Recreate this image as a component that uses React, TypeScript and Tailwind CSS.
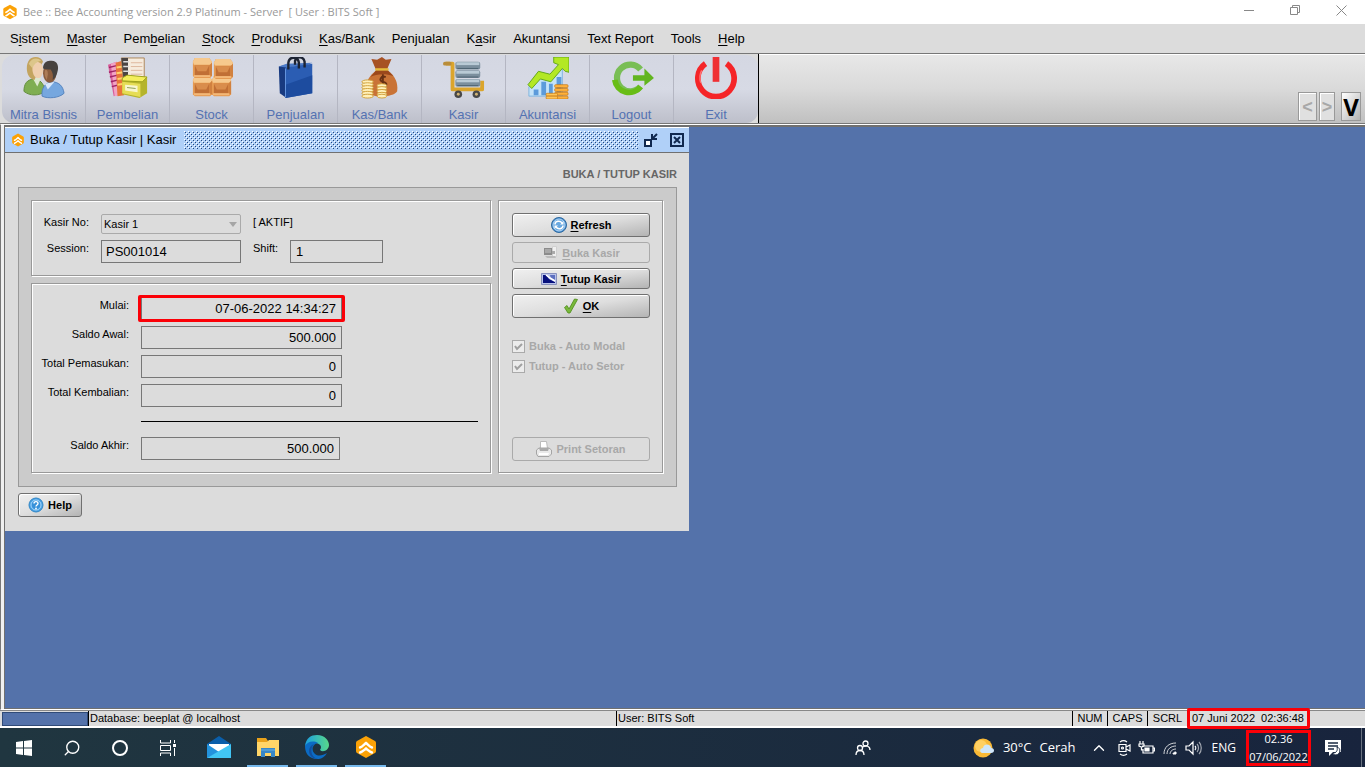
import type { ReactNode } from "react";
import { ChevronUp, Search } from "lucide-react";

const MENU = [
  ["S", "i", "stem"],
  ["", "M", "aster"],
  ["Pem", "b", "elian"],
  ["", "S", "tock"],
  ["", "P", "roduksi"],
  ["", "K", "as/Bank"],
  ["Penjualan", "", ""],
  ["K", "a", "sir"],
  ["Akuntansi", "", ""],
  ["Text Report", "", ""],
  ["Tools", "", ""],
  ["", "H", "elp"],
] as const;

function BeeLogo({ className }: { className: string }) {
  return (
    <svg viewBox="0 0 24 24" className={className} aria-hidden="true">
      <path d="M12 1l9 5q1 .6 1 2v8q0 1.400-1 2l-9 5-9-5q-1-.6-1-2V8q0-1.400 1-2z" fill="#fba207" />
      <path d="M6 12.500c2-.5 3.500-2.500 6-4.500 2.500 2 4 4 6 4.500M6 17.500c2-.5 3.500-2 6-4 2.500 2 4 3.500 6 4" fill="none" stroke="#fff" strokeWidth="2.400" strokeLinecap="round" />
    </svg>
  );
}

function PeopleIcon() {
  return (
    <svg viewBox="0 0 44 44" className="h-[42px] w-[42px]" aria-hidden="true">
      <path d="M1 36c0-8 3-12 10-13 6 0 11 4 12 13-6 5-16 5-22 0z" fill="#7fae52" stroke="#5f8b3a" />
      <path d="M10 22l5 9 4-9z" fill="#dce8cf" />
      <path d="M4 12C4 4 8 0 13 0c4 0 7 2 8 5l-3 5-6 14c-5-1-8-6-8-12z" fill="#c3a45f" />
      <path d="M10 8c3-5 11-3 11 5 0 5-2 9-5 9-4 0-7-5-6-14z" fill="#efcfae" />
      <path d="M6 7c3-6 9-7 13-3-5 1-8 4-9 8z" fill="#dcc68a" />
      <path d="M20 41c-1-8 3-14 10-15 7 0 12 4 13 12-5 5-17 6-23 3z" fill="#76a7df" stroke="#5482bd" />
      <path d="M23 28l3 6 7-8z" fill="#d9e8fa" />
      <ellipse cx="28" cy="17" rx="7" ry="10" fill="#8b5d3d" />
      <path d="M21 12c0-6 4-9 9-8 6 0 8 6 6 12-1 4-3 7-5 8 1-5 0-8-2-11-3 0-6 0-8-1z" fill="#47423f" />
      <path d="M23 14c2-1 3 0 3 4l-1 6c-2-3-3-6-2-10z" fill="#ad7c57" />
    </svg>
  );
}

function PurchaseIcon() {
  return (
    <svg viewBox="0 0 44 44" className="h-[42px] w-[42px]" aria-hidden="true">
      <path d="M1 8l9-3 4 34-7 2z" fill="#d95f9b" />
      <path d="M4 7l6-2 3 35-5 1z" fill="#f1a3c4" />
      <path d="M2 11l8-2M2 16l9-2M3 21l8-2M4 26l8-2M5 31l8-2" stroke="#9f2466" strokeWidth="1.500" />
      <path d="M9 6l7-2 2 36-7 1z" fill="#e8743a" />
      <path d="M10 11l7-1M10 17l7-1M11 23l7-1M11 29l7-1" stroke="#ffd26a" strokeWidth="2" />
      <path d="M15 1h24v22H17z" fill="#f6ebdd" stroke="#ac8557" />
      <path d="M15 1h7v20h-5z" fill="#4b4542" />
      <path d="M17 5h6M17 10h6M17 15h6" stroke="#ddd" strokeWidth="1.500" />
      <path d="M25 6h12M25 10h12M25 14h12M25 18h12" stroke="#dcb79c" />
      <path d="M16 22l5-3 21 2v17l-8 5-18-4z" fill="#b5b42c" />
      <path d="M16 22l5-3 21 2-5 5-21-1z" fill="#f4ee5b" stroke="#9ca01b" />
      <path d="M16 26l19 2v14l-19-4z" fill="#e6dd55" />
      <path d="M19 29l13 1v7l-13-2z" fill="#f8f6cf" />
      <path d="M21 32l9 1" stroke="#8b9b55" />
    </svg>
  );
}

function BoxesIcon() {
  return (
    <svg viewBox="0 0 44 44" className="h-[42px] w-[42px]" aria-hidden="true">
      {[
        [2, 20],
        [22, 20],
        [2, 1],
        [24, 2],
      ].map(([x, y]) => (
        <g key={`${x}-${y}`} transform={`translate(${x} ${y})`}>
          <path d="M0 4l2-4h15l3 4v15l-2 2H2l-2-2z" fill="#e59a52" />
          <path d="M0 4l2-4h15l3 4-1 3H1z" fill="#f6c98d" />
          <path d="M2 8h15v10H2z" fill="#c06f35" />
          <path d="M2 8h15l-3 6H5z" fill="#d98d4c" />
          <path d="M17 8l3-3v14l-3-1z" fill="#d1813f" />
          <path d="M1 19h17" stroke="#f3b878" strokeWidth="2" />
        </g>
      ))}
    </svg>
  );
}

function BagIcon() {
  return (
    <svg viewBox="0 0 44 44" className="h-[42px] w-[42px]" aria-hidden="true">
      <path d="M4 10l8-2v35l-7-5z" fill="#183a80" />
      <path d="M4 10l8-3 27-1-6 3-21 2z" fill="#4b7ac8" />
      <path d="M11 11l28-4v31l-28 5z" fill="#2b5db3" />
      <path d="M11 29l28-10v19l-28 5z" fill="#1d4c9f" />
      <path d="M14 13V6c1-7 10-7 11 0v6M21 8V4c1-5 9-5 10 1v6" fill="none" stroke="#1d2433" strokeWidth="2.500" />
      <path d="M11 12v30" stroke="#6797df" />
    </svg>
  );
}

function MoneyIcon() {
  return (
    <svg viewBox="0 0 44 44" className="h-[42px] w-[42px]" aria-hidden="true">
      <path d="M13 2l6 1 5-3 4 3 6-1-5 12H18z" fill="#a75223" />
      <path d="M18 14h12c8 6 11 13 10 22-4 7-27 7-33 1-1-11 4-17 11-23z" fill="#c97336" />
      <path d="M18 14h12l6 6c-9-3-18-2-24 1z" fill="#9b481c" />
      <path d="M17 13h14" stroke="#e5bd3d" strokeWidth="2.500" />
      <path d="M28 21c-5-2-8 4-3 5 6 1 4 6-1 5M25 18v16" fill="none" stroke="#683113" strokeWidth="2" />
      {[26, 29, 32, 35, 38, 41].map((y) => (
        <ellipse key={y} cx="9" cy={y} rx="6" ry="2" fill="#fff0ba" stroke="#d0a13b" />
      ))}
      {[30, 33, 36, 39, 41].map((y) => (
        <ellipse key={y} cx="24" cy={y} rx="5" ry="2" fill="#fff0ba" stroke="#d0a13b" />
      ))}
    </svg>
  );
}

function CartIcon() {
  return (
    <svg viewBox="0 0 44 44" className="h-[42px] w-[42px]" aria-hidden="true">
      <path d="M3 7h7v27h31v-9" fill="none" stroke="#dba52c" strokeWidth="4" strokeLinejoin="round" />
      <path d="M2 7h5" stroke="#b98d3a" strokeWidth="4" strokeLinecap="round" />
      {[5, 14, 23].map((y) => (
        <g key={y}>
          <rect x="13" y={y} width="26" height="8" rx="2" fill="#7b8f9d" />
          <path d={`M14 ${y + 2}h24`} stroke="#b9cad5" strokeWidth="3" />
          <path d={`M15 ${y + 7}h22`} stroke="#4d6270" />
        </g>
      ))}
      <circle cx="16" cy="39" r="4" fill="#484848" />
      <circle cx="35" cy="39" r="4" fill="#484848" />
      <circle cx="16" cy="39" r="1.500" fill="#d1b477" />
      <circle cx="35" cy="39" r="1.500" fill="#d1b477" />
    </svg>
  );
}

function ChartIcon() {
  return (
    <svg viewBox="0 0 44 44" className="h-[42px] w-[42px]" aria-hidden="true">
      <path d="M2 31l12-11 10 3 13-14v32H2z" fill="#c5e3f8" stroke="#7fb3de" />
      <path d="M7 34h5v6H7zM15 26h5v14h-5zM23 28h4v12h-4zM31 21h5v19h-5z" fill="#5c9bdb" />
      <path d="M1 29L12 15l12 3 9-10-5-2V0h16v16l-4-1-3-3-12 14-11-3-9 10z" fill="#b3e824" stroke="#62a618" strokeLinejoin="round" />
      {[29, 33, 37, 41].map((y) => (
        <rect key={y} x="29" y={y} width="14" height="3" rx="1" fill="#ffb13a" stroke="#c2730f" strokeWidth=".7" />
      ))}
      {[38, 41].map((y) => (
        <rect key={y} x="20" y={y} width="12" height="3" rx="1" fill="#ffc556" stroke="#c2730f" strokeWidth=".7" />
      ))}
    </svg>
  );
}

function LogoutIcon() {
  return (
    <svg viewBox="0 0 44 44" className="h-[42px] w-[44px]" aria-hidden="true">
      <path d="M31 13A14 14 0 1 0 31 31" fill="none" stroke="#79be55" strokeWidth="6.500" />
      <path d="M4 24a15 15 0 0 0 27 7" fill="none" stroke="#68bd16" strokeWidth="6" />
      <path d="M23 19h12v-7l10 10-10 8v-5H23z" fill="#62b51f" />
    </svg>
  );
}

function PowerIcon() {
  return (
    <svg viewBox="0 0 44 44" className="h-[42px] w-[44px]" aria-hidden="true">
      <path d="M11 7a19 19 0 1 0 22 0" fill="none" stroke="#f52528" strokeWidth="6" />
      <path d="M22 0v26" stroke="#ef3034" strokeWidth="7" />
      <path d="M7 14a17 17 0 0 0-1 13" fill="none" stroke="#ff7273" strokeWidth="1.500" />
    </svg>
  );
}

const TOOLS = [
  { label: "Mitra Bisnis", icon: PeopleIcon },
  { label: "Pembelian", icon: PurchaseIcon },
  { label: "Stock", icon: BoxesIcon },
  { label: "Penjualan", icon: BagIcon },
  { label: "Kas/Bank", icon: MoneyIcon },
  { label: "Kasir", icon: CartIcon },
  { label: "Akuntansi", icon: ChartIcon },
  { label: "Logout", icon: LogoutIcon },
  { label: "Exit", icon: PowerIcon },
];

function RefreshIcon() {
  return (
    <svg viewBox="0 0 16 16" className="h-4 w-4" aria-hidden="true">
      <circle cx="8" cy="8" r="7.500" fill="#4088cc" stroke="#306a9f" />
      <circle cx="8" cy="8" r="6" fill="#69a8e0" stroke="#b5d6f3" />
      <path d="M4 7.500c0-3.500 5-4.500 7-1.500M12 8.500c0 3.500-5 4.500-7 1.500" fill="none" stroke="#fff" strokeWidth="1.500" />
      <path d="M12.500 4v3.500H9zM3.500 12V8.500H7z" fill="#fff" />
    </svg>
  );
}

function RegisterIcon() {
  return (
    <svg viewBox="0 0 16 16" className="h-4 w-4" aria-hidden="true">
      <path d="M10.500 1.500h4v10h-4z" fill="#efefef" stroke="#d0d0d0" />
      <path d="M2 3h8v7H2z" fill="#8b8b8b" />
      <path d="M3 5h6M3 7h6" stroke="#c4c4c4" />
      <path d="M10 6h3v3h-3z" fill="#aaa" />
      <path d="M3 11h10l1 2H5z" fill="#bbb" />
    </svg>
  );
}

function CloseShiftIcon() {
  return (
    <svg viewBox="0 0 16 12" className="h-3 w-4" aria-hidden="true">
      <path d="M.5.5h15v11H.5z" fill="#b9c3ea" stroke="#8790bd" />
      <path d="M2 2h3l3 4 6 3v1H2z" fill="#07107d" />
      <path d="M9 2h5v5l-4-1z" fill="#5c6fc0" />
      <path d="M5 2l4 3 5 3" fill="none" stroke="#fff" strokeWidth="1.500" />
    </svg>
  );
}

function CheckIcon() {
  return (
    <svg viewBox="0 0 16 16" className="h-4 w-4" aria-hidden="true">
      <path d="M1.500 9.500l2.500-2 2 3.500 5.500-10 3 .5L7 15H5z" fill="#79b93c" stroke="#4b8a16" strokeWidth=".8" strokeLinejoin="round" />
    </svg>
  );
}

function PrinterIcon() {
  return (
    <svg viewBox="0 0 16 16" className="h-4 w-4" aria-hidden="true">
      <path d="M4.500.5h6l1 7h-7z" fill="#fff" stroke="#bbb" />
      <path d="M.5 9L3 7h10l2.500 2v4L13 15.500H2L.5 13z" fill="#e9e9e9" stroke="#a5a5a5" />
      <path d="M3 7h10l-1 3H4z" fill="#aaa" />
      <path d="M3 12h10l-1 2H3z" fill="#fff" />
    </svg>
  );
}

function HelpIcon() {
  return (
    <svg viewBox="0 0 16 16" className="h-4 w-4" aria-hidden="true">
      <circle cx="8" cy="8" r="7" fill="#4ba2e5" stroke="#2f85c5" />
      <circle cx="8" cy="8" r="5" fill="#3791da" stroke="#a9d8fb" />
      <path d="M6 6.500c0-2.500 4-2.500 4 0 0 1.500-2 1.500-2 3" fill="none" stroke="#fff" strokeWidth="1.400" />
      <circle cx="8" cy="11.500" r=".9" fill="#fff" />
    </svg>
  );
}

type ActionButtonProps = {
  icon: ReactNode;
  hotkey?: string;
  label: string;
  disabled?: boolean;
  size: string;
};

function ActionButton({ icon, hotkey, label, disabled, size }: ActionButtonProps) {
  return (
    <button
      type="button"
      disabled={disabled}
      className={`flex items-center justify-center gap-1 rounded-[3px] border text-[11px] leading-4 font-bold whitespace-nowrap ${size} ${
        disabled
          ? "border-[#aaa] bg-[#dcdcdc] text-[#a8a8a8]"
          : "border-[#707070] bg-linear-to-br from-[#f0f0f0] via-[#dedede] to-[#b4b4b4] text-black shadow-[inset_1px_1px_0_#fff]"
      }`}
    >
      {icon}
      <span>
        {hotkey && <u className="underline-offset-2">{hotkey}</u>}
        {label}
      </span>
    </button>
  );
}

type AmountRowProps = {
  id: string;
  label: string;
  value: string;
  width?: string;
  marked?: boolean;
};

function AmountRow({ id, label, value, width = "w-[201px]", marked }: AmountRowProps) {
  return (
    <div className="flex items-start gap-3">
      <label htmlFor={id} className="w-[97px] text-right text-[11px] leading-4 whitespace-nowrap">
        {label}
      </label>
      <div className="relative">
        <input
          id={id}
          readOnly
          defaultValue={value}
          className={`block h-[23px] border border-[#777] bg-[#dcdcdc] px-[5px] text-right text-[13px] ${width}`}
        />
        {marked && (
          <span className="pointer-events-none absolute -inset-x-[3px] -inset-y-0.5 rounded-xs border-3 border-[#fb0007]" />
        )}
      </div>
    </div>
  );
}

function CashierWindow() {
  const panel = "border border-[#999] bg-[#dcdcdc] shadow-[inset_1px_1px_0_#fff,1px_1px_0_#fff]";

  return (
    <section className="w-[684px] max-w-full border-t border-white bg-[#dcdcdc] pb-3.5" aria-label="Buka / Tutup Kasir">
      <header className="flex h-[25px] items-center border-b border-[#707070] bg-[#b0d0f8] pl-1.5">
        <BeeLogo className="h-3.5 w-3.5" />
        <h1 className="pr-2 pl-[5px] text-[13px] whitespace-nowrap">Buka / Tutup Kasir | Kasir</h1>
        <svg className="h-[18px] min-w-0 flex-1" aria-hidden="true">
          <defs>
            <pattern id="bumps" width="4" height="4" patternUnits="userSpaceOnUse">
              <path d="M0 0h1v1H0zM2 2h1v1H2z" fill="#fff" />
              <path d="M1 1h1v1H1zM3 3h1v1H3z" fill="#24477c" />
            </pattern>
          </defs>
          <rect width="100%" height="100%" fill="url(#bumps)" />
        </svg>
        <div className="flex items-center gap-3 pr-[5px] pl-[5px]">
          <button type="button" aria-label="Kembalikan">
            <svg viewBox="0 0 14 14" className="h-3.5 w-3.5" aria-hidden="true">
              <path d="M1 7h6v6H1z" fill="#fff" stroke="#10284f" strokeWidth="2" />
              <path d="M13 1L9 5M8 1v5h5" fill="none" stroke="#10284f" strokeWidth="2" />
            </svg>
          </button>
          <button type="button" aria-label="Tutup">
            <svg viewBox="0 0 14 14" className="h-3.5 w-3.5" aria-hidden="true">
              <path d="M1 1h12v12H1z" fill="#b0d0f8" stroke="#10284f" strokeWidth="2" />
              <path d="M4 4l6 6M10 4l-6 6" stroke="#10284f" strokeWidth="2" />
            </svg>
          </button>
        </div>
      </header>

      <h2 className="px-3 pt-[13px] pb-[5px] text-right text-[11px] leading-4 font-bold text-[#666]">
        BUKA / TUTUP KASIR
      </h2>

      <div className="mr-3 ml-[13px] flex gap-[7px] border border-[#999] bg-[#cbcbcb] pt-3 pr-[13px] pb-[13px] pl-3">
        <div className="flex min-w-0 flex-1 flex-col gap-[7px]">
          <div className={`flex flex-col gap-1.5 pt-[13px] pb-3 ${panel}`}>
            <div className="flex items-start gap-3">
              <label htmlFor="kasir" className="w-[57px] text-right text-[11px] leading-4">
                Kasir No:
              </label>
              <div className="relative">
                <select
                  id="kasir"
                  disabled
                  className="block h-5 w-[140px] appearance-none rounded-xs border border-[#aaa] px-0.5 text-[11px] text-black opacity-100"
                >
                  <option>Kasir 1</option>
                </select>
                <span className="pointer-events-none absolute top-2 right-1 border-x-4 border-t-5 border-x-transparent border-t-[#a5a5a5]" />
              </div>
              <span className="text-[11px] leading-4">[ AKTIF]</span>
            </div>
            <div className="flex items-start gap-3">
              <label htmlFor="session" className="w-[57px] text-right text-[11px] leading-4">
                Session:
              </label>
              <input
                id="session"
                readOnly
                defaultValue="PS001014"
                className="h-[23px] w-[140px] border border-[#777] px-1 text-[13px]"
              />
              <label htmlFor="shift" className="text-[11px] leading-4">
                Shift:
              </label>
              <input
                id="shift"
                readOnly
                defaultValue="1"
                className="h-[23px] w-[93px] border border-[#777] px-[5px] text-[13px]"
              />
            </div>
          </div>

          <div className={`flex flex-1 flex-col gap-1.5 pt-[13px] pb-3 ${panel}`}>
            <AmountRow id="mulai" label="Mulai:" value="07-06-2022 14:34:27" marked />
            <AmountRow id="awal" label="Saldo Awal:" value="500.000" />
            <AmountRow id="masuk" label="Total Pemasukan:" value="0" />
            <AmountRow id="kembali" label="Total Kembalian:" value="0" />
            <hr className="mt-2 mr-3 mb-[9px] ml-[109px] border-black" />
            <AmountRow id="akhir" label="Saldo Akhir:" value="500.000" width="w-[199px]" />
          </div>
        </div>

        <div className={`flex w-[165px] shrink-0 flex-col gap-[5px] pt-3 pr-3 pb-[11px] pl-[13px] ${panel}`}>
          <ActionButton icon={<RefreshIcon />} hotkey="R" label="efresh" size="h-6" />
          <ActionButton icon={<RegisterIcon />} hotkey="B" label="uka Kasir" size="h-[21px]" disabled />
          <ActionButton icon={<CloseShiftIcon />} hotkey="T" label="utup Kasir" size="h-[21px]" />
          <ActionButton icon={<CheckIcon />} hotkey="O" label="K" size="h-6" />
          <div className="mt-[15px] flex flex-col gap-1 text-[11px] leading-4 font-bold text-[#a8a8a8]">
            {["Buka - Auto Modal", "Tutup - Auto Setor"].map((label) => (
              <label key={label} className="flex items-center gap-1 whitespace-nowrap">
                <span className="relative block h-[13px] w-[13px]">
                  <input
                    type="checkbox"
                    disabled
                    defaultChecked
                    className="block h-[13px] w-[13px] appearance-none border border-[#aaa] bg-[#ececec]"
                  />
                  <svg viewBox="0 0 13 13" className="pointer-events-none absolute inset-0" aria-hidden="true">
                    <path d="M3 6l2 3 5-5" fill="none" stroke="#a0a0a0" strokeWidth="2" />
                  </svg>
                </span>
                {label}
              </label>
            ))}
          </div>
          <div className="mt-auto flex flex-col">
            <ActionButton icon={<PrinterIcon />} label="Print Setoran" size="h-6" disabled />
          </div>
        </div>
      </div>

      <div className="flex px-[13px] pt-1.5">
        <ActionButton icon={<HelpIcon />} label="Help" size="h-6 w-16" />
      </div>
    </section>
  );
}

function Desktop() {
  return (
    <main className="flex flex-1 border-y border-l border-y-white border-l-[#777] bg-[#f0f0f0] pl-[3px]">
      <div className="flex-1 border-t-2 border-b border-l border-[#707070] bg-[#5472aa]">
        <CashierWindow />
      </div>
    </main>
  );
}

function TitleBar() {
  return (
    <header className="flex h-6 items-center bg-white pl-0.5">
      <BeeLogo className="h-4 w-4" />
      <p className="flex-1 pl-[5px] font-['Open_Sans',sans-serif] text-[11px] whitespace-pre text-[#999]">
        Bee :: Bee Accounting version 2.9 Platinum - Server {" [ User : BITS Soft ]"}
      </p>
      <div className="flex gap-[35px] pr-[18px] pb-1 text-[#888]">
        <button type="button" aria-label="Minimize">
          <svg viewBox="0 0 11 11" className="h-[11px] w-[11px]" aria-hidden="true">
            <path d="M0 5.500h10" stroke="currentColor" />
          </svg>
        </button>
        <button type="button" aria-label="Restore">
          <svg viewBox="0 0 11 11" className="h-[11px] w-[11px]" aria-hidden="true">
            <path d="M.5 2.500h7v7h-7zM2.500 2.500v-2h7v7h-2" fill="none" stroke="currentColor" />
          </svg>
        </button>
        <button type="button" aria-label="Close">
          <svg viewBox="0 0 11 11" className="h-[11px] w-[11px]" aria-hidden="true">
            <path d="M.5.5l10 10M10.500.5l-10 10" stroke="currentColor" />
          </svg>
        </button>
      </div>
    </header>
  );
}

function ToolBar() {
  return (
    <div className="flex h-[71px] border-t border-b border-[#777] bg-linear-to-b from-[#e8e8e8] via-[#dadada] to-[#c0c0c0] shadow-[inset_0_1px_0_#fff]">
      <div className="flex border-r border-black bg-[#dcdcdc] pt-px pl-0.5">
        {TOOLS.map(({ label, icon: Icon }) => (
          <button
            key={label}
            type="button"
            className="flex w-21 flex-col items-center justify-between border-r border-[#b4b6c2] bg-linear-to-b from-[#d4d7e2] via-[#d7dae5] to-[#bdbfca] pt-0.5 text-[13px] leading-4 text-[#5472b2] first:rounded-l-xl last:rounded-r-xl last:border-r-0"
          >
            <Icon />
            <span>{label}</span>
          </button>
        ))}
      </div>
      <div className="flex flex-1 items-end justify-end gap-0.5 pr-1 pb-0.5">
        <button type="button" disabled className="h-[29px] w-[19px] border border-[#999] bg-[#e0e0e0] text-[18px] leading-6 font-bold text-[#a8a8a8] shadow-[inset_1px_1px_0_#fff]">
          &lt;
        </button>
        <button type="button" disabled className="h-[29px] w-4 border border-[#999] bg-[#e0e0e0] text-[18px] leading-6 font-bold text-[#a8a8a8] shadow-[inset_1px_1px_0_#fff]">
          &gt;
        </button>
        <button type="button" className="ml-1 h-[29px] w-5 border border-[#999] bg-linear-to-br from-white to-[#b4b4b4] font-['Open_Sans',sans-serif] text-[24px] leading-6 font-bold">
          V
        </button>
      </div>
    </div>
  );
}

function StatusBar() {
  return (
    <footer className="flex h-[18px] items-center border-t border-b-2 border-t-[#888] border-b-white bg-[#dcdcdc] pl-0.5 text-[11px] leading-[15px] whitespace-nowrap">
      <span className="h-3.5 w-[86px] border border-[#304b78] bg-[#5472aa]" />
      <span className="w-[528px] border-l border-black pl-px">Database: beeplat @ localhost</span>
      <span className="flex-1 border-l border-black pl-px">User: BITS Soft</span>
      <span className="w-[35px] border-l border-black text-center">NUM</span>
      <span className="w-10 border-l border-black text-center">CAPS</span>
      <span className="w-10 border-l border-black text-center">SCRL</span>
      <span className="relative w-[123px] pl-[5px] whitespace-pre">
        {"07 Juni 2022  02:36:48"}
        <span className="pointer-events-none absolute inset-x-0 -inset-y-[3px] rounded-xs border-3 border-[#fb0007]" />
      </span>
      <span className="w-[55px]" />
    </footer>
  );
}

const PINNED = [
  {
    label: "Mail",
    open: false,
    icon: (
      <svg viewBox="0 0 24 24" className="h-6 w-6" aria-hidden="true">
        <path d="M0 9l12-8 12 8v14H0z" fill="#0a5eaa" />
        <path d="M2 9h20v8H2z" fill="#fff" />
        <path d="M0 9l12 8L0 23z" fill="#2392dc" />
        <path d="M24 9v14H0l12-7z" fill="#41c5f4" />
      </svg>
    ),
  },
  {
    label: "File Explorer",
    open: true,
    icon: (
      <svg viewBox="0 0 24 24" className="h-6 w-6" aria-hidden="true">
        <path d="M1 3h9l2 3h11v15H1z" fill="#e9a21b" />
        <path d="M1 7h10l2-2h10v16H1z" fill="#ffd568" />
        <path d="M5 22v-9h14v9h-4v-4H9v4z" fill="#3787c8" />
        <path d="M5 15h14" stroke="#66b0e4" />
      </svg>
    ),
  },
  {
    label: "Edge",
    open: true,
    icon: (
      <svg viewBox="0 0 24 24" className="h-6 w-6" aria-hidden="true">
        <defs>
          <linearGradient id="edgeTop" x1="0" x2="1">
            <stop offset="0" stopColor="#1b9fe0" />
            <stop offset="1" stopColor="#58d88a" />
          </linearGradient>
        </defs>
        <path d="M0 11C1 3 6 0 12 0c8 0 12 6 12 10 0 5-6 8-9 5 3-4-1-7-5-7-5 0-7 2-10 3z" fill="url(#edgeTop)" />
        <path d="M0 11c2-4 8-6 13-3-6 1-7 8-3 11 4 3 8 1 12-1-4 7-11 7-15 5-5-2-7-7-7-12z" fill="#0b6bc4" />
        <path d="M9 9c-4 4-4 13 4 15-6 0-9-4-9-8 0-3 2-6 5-7z" fill="#124f9d" />
      </svg>
    ),
  },
  { label: "Bee", open: true, icon: <BeeLogo className="h-6 w-6" /> },
];

function TaskBar() {
  return (
    <footer className="flex h-[39px] items-stretch bg-linear-to-r from-[#203640] to-[#18243d] font-['Open_Sans',sans-serif] text-white">
      <button type="button" aria-label="Start" className="flex w-12 items-center justify-center">
        <svg viewBox="0 0 16 16" className="h-4 w-4" fill="currentColor" aria-hidden="true">
          <path d="M0 2l7-1v6.500H0zM8 1l8-1v7.500H8zM0 8.500h7V15l-7-1zM8 8.500h8V16l-8-1z" />
        </svg>
      </button>
      <button type="button" aria-label="Search" className="flex w-12 items-center justify-center">
        <Search className="h-[18px] w-[18px] -scale-x-100" strokeWidth={1.8} />
      </button>
      <button type="button" aria-label="Cortana" className="flex w-12 items-center justify-center">
        <span className="h-4 w-4 rounded-full border-2 border-white" />
      </button>
      <button type="button" aria-label="Task View" className="mr-0.5 flex w-12 items-center justify-center">
        <svg viewBox="0 0 16 16" className="h-4 w-4" fill="none" stroke="currentColor" aria-hidden="true">
          <path d="M.5 0v3h10V0M.5 5.500h10v5H.5zM.5 16v-3h10v3M14.500 0v3M14.500 8v8" />
          <path d="M13 4h3v3h-3z" fill="currentColor" stroke="none" />
        </svg>
      </button>
      {PINNED.map(({ label, open, icon }) => (
        <button
          key={label}
          type="button"
          aria-label={label}
          className={`mx-1 flex w-[41px] items-center justify-center border-b-2 ${open ? "border-[#76b9ed]" : "border-transparent"}`}
        >
          {icon}
        </button>
      ))}

      <div className="ml-auto flex items-center text-[13px] whitespace-nowrap">
        <button type="button" aria-label="People" className="mr-[102px]">
          <svg viewBox="0 0 16 16" className="h-4 w-4" fill="none" stroke="currentColor" strokeWidth="1.300" aria-hidden="true">
            <circle cx="5" cy="8" r="2.500" />
            <path d="M1 15c0-6 8-6 8 0" />
            <circle cx="10.500" cy="3.500" r="2.500" />
            <path d="M8 7c3-2 7-1 7 3" />
          </svg>
        </button>
        <button type="button" className="flex items-center gap-2">
          <svg viewBox="0 0 22 20" className="h-5 w-[22px]" aria-hidden="true">
            <circle cx="10" cy="10" r="9.500" fill="#f9b936" />
            <circle cx="8" cy="8" r="6" fill="#ffd063" />
            <path d="M9 15c-3-1-2-5 1-5 1-5 8-4 8 0 4 0 4 5 0 5z" fill="#cfe6fa" />
          </svg>
          <span>30°C</span>
          <span>Cerah</span>
        </button>
        <button type="button" aria-label="Show hidden icons" className="ml-3.5">
          <ChevronUp className="h-[18px] w-[18px]" strokeWidth={1.8} />
        </button>
        <div className="ml-2 flex w-[86px] items-center justify-between">
          <svg viewBox="0 0 16 16" className="h-4 w-4" fill="none" stroke="currentColor" strokeWidth="1.200" aria-hidden="true">
            <path d="M3 4.500h7v7H3zM10 7l4-2v6l-4-2M4 2c2-1.500 5-1.500 7 0M4 14c2 1.500 5 1.500 7 0" />
            <circle cx="6.500" cy="8" r="1" />
          </svg>
          <svg viewBox="0 0 17 16" className="h-4 w-[17px]" fill="none" stroke="currentColor" strokeWidth="1.200" aria-hidden="true">
            <path d="M4 6h11v7H5V9M15 8h1.500v3H15M2 1v3M5 1v3M1 4h5v2L3.500 7 1 6zM3.500 7v3H5" />
            <path d="M7 8h4v3H7z" fill="currentColor" />
          </svg>
          <svg viewBox="0 0 16 16" className="h-4 w-4" fill="none" stroke="currentColor" aria-hidden="true">
            <path d="M2 14C2 7 7 3 14 3M5 14c0-5 4-8 9-8M8 14c0-3 3-5 6-5" opacity=".8" />
            <path d="M11 14c0-1 1-2 3-2v2z" fill="currentColor" />
          </svg>
          <svg viewBox="0 0 17 16" className="h-4 w-[17px]" fill="none" stroke="currentColor" strokeWidth="1.200" aria-hidden="true">
            <path d="M1 6h3l4-4v12l-4-4H1zM10 6c1 1 1 3 0 4" />
            <path d="M12 4c2 2 2 6 0 8M14 2c3 3 3 9 0 12" opacity=".6" />
          </svg>
        </div>
        <button type="button" className="ml-2.5 text-[12px]">
          ENG
        </button>
        <button type="button" className="relative ml-2.5 flex h-full w-[65px] flex-col items-center pt-0.5 text-[11px] leading-[18px]">
          <span>02.36</span>
          <span>07/06/2022</span>
          <span className="pointer-events-none absolute inset-x-0 top-0.5 bottom-px border-3 border-[#fb0007]" />
        </button>
        <button type="button" aria-label="Notifications" className="mr-[19px] ml-3.5">
          <svg viewBox="0 0 17 16" className="h-4 w-[17px]" aria-hidden="true">
            <path d="M0 0h16v12H8l-4 4v-4H0z" fill="#fff" />
            <path d="M3 3h10M3 6h10M3 9h6" stroke="#1b2b43" strokeWidth="1.300" />
            <path d="M12 7c4 1 4 7-1 8-2 0-3-1-3-2 3 0 5-2 4-6z" fill="#fff" stroke="#1b2b43" />
          </svg>
        </button>
        <span className="h-full w-1 border-l border-[#68717f]" />
      </div>
    </footer>
  );
}

export default function App() {
  return (
    <div className="flex min-h-screen flex-col bg-[#dcdcdc] font-['Liberation_Sans',Arial,sans-serif] text-black">
      <TitleBar />
      <nav className="flex h-[29px] items-center gap-[17px] bg-[#dcdcdc] px-2.5 text-[13px] whitespace-nowrap">
        {MENU.map(([before, hotkey, after]) => (
          <button key={before + hotkey + after} type="button">
            {before}
            {hotkey && <u className="underline-offset-2">{hotkey}</u>}
            {after}
          </button>
        ))}
      </nav>
      <ToolBar />
      <Desktop />
      <StatusBar />
      <TaskBar />
    </div>
  );
}
